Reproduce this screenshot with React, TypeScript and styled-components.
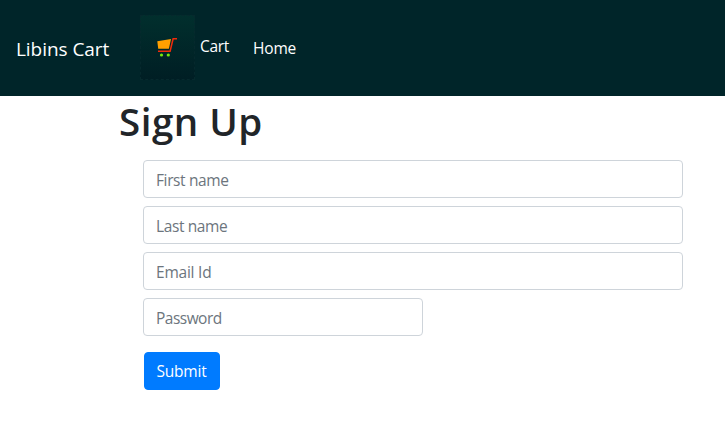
import React from "react";
import styled, { createGlobalStyle } from "styled-components";

const GlobalStyle = createGlobalStyle`
  *, *::before, *::after { box-sizing: border-box; }
  body {
    margin: 0;
    background: #fff;
    color: #212529;
    font: 400 16px/24px "Segoe UI", "Open Sans", "Noto Sans", sans-serif;
  }
`;

const Navbar = styled.nav`
  display: flex;
  align-items: flex-start;
  height: 96px;
  padding-left: 16px;
  background: #002529;
  color: #fff;
`;

const Brand = styled.a`
  width: 124px;
  margin-top: 34px;
  color: #fff;
  font-size: 19px;
  line-height: 30px;
  letter-spacing: -0.05px;
  white-space: nowrap;
`;

const CartTile = styled.span`
  display: flex;
  width: 55px;
  height: 65px;
  margin-top: 15px;
  border: 1px dashed #06292d;
  background: linear-gradient(#012f2d, #001e24) border-box;
`;

const CartIcon = styled.svg`
  width: 22px;
  height: 20px;
  margin: 21px 0 0 16px;
`;

const NavLink = styled.a<{ $gap: number; $top: number; $spacing: number }>`
  margin: ${(p) => p.$top}px 0 0 ${(p) => p.$gap}px;
  color: #fff;
  font-size: 15.5px;
  line-height: 24px;
  letter-spacing: ${(p) => p.$spacing}px;
`;

const Title = styled.h1`
  margin: 1px 0 15px 119px;
  font-size: 38.5px;
  font-weight: 600;
  line-height: 48px;
  letter-spacing: 0.5px;
`;

const Form = styled.form`
  display: flex;
  flex-direction: column;
  align-items: flex-start;
  gap: 8px;
  margin-left: 143px;
`;

const Field = styled.input<{ $width: number; $spacing: number }>`
  width: ${(p) => p.$width}px;
  height: 38px;
  padding: 8px 12px 6px;
  border: 1px solid #ced4da;
  border-radius: 4px;
  background: #fff;
  color: #495057;
  font: inherit;
  font-size: 15.5px;
  letter-spacing: ${(p) => p.$spacing}px;
  outline: none;
  &::placeholder { color: #6c757d; opacity: 1; }
`;

const SubmitButton = styled.button`
  width: 76px;
  height: 38px;
  margin: 8px 0 0 1px;
  padding: 0 1px 0 0;
  border: 1px solid #007bff;
  border-radius: 4px;
  background: #007bff;
  color: #fff;
  font: inherit;
  font-size: 15.5px;
  letter-spacing: -0.2px;
`;

const fields = [
  { label: "First name", type: "text", width: 540, spacing: -0.38 },
  { label: "Last name", type: "text", width: 540, spacing: -0.4 },
  { label: "Email Id", type: "email", width: 540, spacing: -0.22 },
  { label: "Password", type: "password", width: 280, spacing: -0.52 },
];

export default function App() {
  return (
    <>
      <GlobalStyle />
      <Navbar>
        <Brand>Libins Cart</Brand>
        <CartTile>
          <CartIcon viewBox="0 0 22 20" aria-hidden="true">
            <path d="M0.3 4.2 14 2 11.9 11.7H1.2Z" fill="#ffa000" />
            <path d="M20 1.8H16.1L13.1 14.2H1" fill="none" stroke="#f02b0b" strokeWidth="1.5" />
            <circle cx="4.5" cy="18" r="1.6" fill="#76e80c" />
            <circle cx="11.3" cy="18" r="1.6" fill="#76e80c" />
          </CartIcon>
        </CartTile>
        <NavLink $gap={5} $top={34} $spacing={-0.3}>Cart</NavLink>
        <NavLink $gap={24} $top={36} $spacing={-0.2}>Home</NavLink>
      </Navbar>
      <Title>Sign Up</Title>
      <Form>
        {fields.map((f) => (
          <Field key={f.label} type={f.type} placeholder={f.label} $width={f.width} $spacing={f.spacing} />
        ))}
        <SubmitButton type="button">Submit</SubmitButton>
      </Form>
    </>
  );
}
